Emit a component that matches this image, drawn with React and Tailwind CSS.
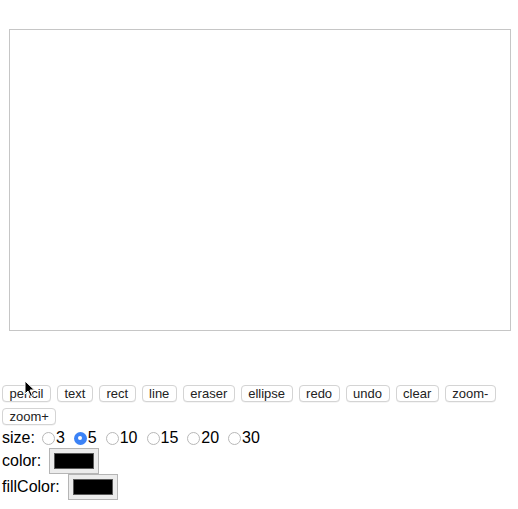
import { useState } from 'react';

const TOOLS = ['pencil', 'text', 'rect', 'line', 'eraser', 'ellipse', 'redo', 'undo', 'clear', 'zoom-', 'zoom+'];
const SIZES = [3, 5, 10, 15, 20, 30];

function ColorBox() {
  return (
    <div className="w-[50px] h-[26px] border border-[#b5b5b5] bg-[#ececec] flex items-center justify-center">
      <div className="w-[40px] h-[16px] bg-black border border-[#5a5a5a]" />
    </div>
  );
}

export default function App() {
  const [size, setSize] = useState(5);

  return (
    <div className="relative font-['Liberation_Sans',Arial,sans-serif] text-black bg-white w-[518px] h-[509px]">
      {/* Canvas */}
      <div className="ml-[9px] pt-[29px]">
        <div className="w-[502px] h-[302px] border border-[#c6c6c6] bg-white" />
      </div>

      {/* Toolbar */}
      <div className="mt-[54px] pl-[2px] flex flex-wrap gap-x-[6px] gap-y-[6px] w-[506px]">
        {TOOLS.map((t) => (
          <button
            key={t}
            className="h-[17px] px-[6.5px] text-[13px] leading-none border border-[#d4d4d4] rounded-[4px] bg-white text-[#222] shadow-[0_0.5px_0.5px_rgba(0,0,0,0.08)]"
          >
            {t}
          </button>
        ))}
      </div>

      {/* Size */}
      <div className="mt-[3px] pl-[2px] h-[20px] flex items-center text-[16px]">
        <span>size:</span>
        {SIZES.map((s, i) => (
          <label key={s} className={i === 0 ? 'flex items-center ml-[7px]' : 'flex items-center ml-[9px]'}>
            {size === s ? (
              <span className="w-[13px] h-[13px] rounded-full bg-[#3b82f6] flex items-center justify-center mr-[1px]">
                <span className="w-[4px] h-[4px] rounded-full bg-white" />
              </span>
            ) : (
              <span
                onClick={() => setSize(s)}
                className="w-[13px] h-[13px] rounded-full border border-[#b8b8b8] bg-white mr-[1px]"
              />
            )}
            <span>{s}</span>
          </label>
        ))}
      </div>

      {/* Colors */}
      <div className="pl-[2px] h-[26px] flex items-center text-[16px]">
        <span className="mr-[8px]">color:</span>
        <ColorBox />
      </div>
      <div className="pl-[2px] h-[26px] flex items-center text-[16px]">
        <span className="mr-[8px]">fillColor:</span>
        <ColorBox />
      </div>

      {/* Mouse cursor */}
      <svg className="absolute left-[24px] top-[380px]" width="12" height="18" viewBox="0 0 12 18">
        <path d="M1 1 L1 14 L4 11 L6.5 16.5 L8.5 15.5 L6 10 L10.5 10 Z" fill="black" stroke="white" strokeWidth="1" />
      </svg>
    </div>
  );
}
